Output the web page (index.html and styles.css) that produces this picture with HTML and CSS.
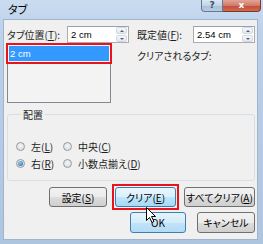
FILE: index.html
```html
<!DOCTYPE html>
<html lang="ja">
<head>
  <meta charset="UTF-8" />
  <title>タブ</title>
  <link rel="stylesheet" href="styles.css">
</head>
<body>

  <div class="window">
    <div class="titlebar">
      <span class="title">タブ</span>
      <div class="caption">
        <span class="cap-btn help">?</span>
        <span class="cap-btn close">x</span>
      </div>
    </div>

    <div class="client">
      <div class="top">
        <div class="col-left">
          <div class="field">
            <span class="lbl lbl-pos">タブ位置(<u>T</u>):</span>
            <div class="spin">
              <span class="spin-val">2 cm</span>
              <span class="spin-btns"><i class="up"></i><i class="down"></i></span>
            </div>
          </div>
          <div class="listbox">
            <div class="item sel">2 cm</div>
          </div>
        </div>

        <div class="col-right">
          <div class="field">
            <span class="lbl lbl-def">既定値(<u>F</u>):</span>
            <div class="spin">
              <span class="spin-val">2.54 cm</span>
              <span class="spin-btns"><i class="up"></i><i class="down"></i></span>
            </div>
          </div>
          <div class="clear-label">クリアされるタブ:</div>
        </div>
      </div>

      <fieldset class="group">
        <legend>配置</legend>
        <div class="radios">
          <label class="radio"><span class="dot"></span><span class="rtext">左(<u>L</u>)</span></label>
          <label class="radio"><span class="dot"></span><span class="rtext">中央(<u>C</u>)</span></label>
          <label class="radio"><span class="dot on"></span><span class="rtext">右(<u>R</u>)</span></label>
          <label class="radio"><span class="dot"></span><span class="rtext">小数点揃え(<u>D</u>)</span></label>
        </div>
      </fieldset>

      <div class="btn-row row1">
        <button class="btn w-set">設定(<u>S</u>)</button>
        <span class="marked"><button class="btn hot w-clear">クリア(<u>E</u>)</button></span>
        <button class="btn w-all">すべてクリア(<u>A</u>)</button>
      </div>
      <div class="btn-row row2">
        <button class="btn def w-ok">OK</button>
        <button class="btn w-cancel">キャンセル</button>
      </div>
    </div>

    <svg class="cursor" width="12" height="17" viewBox="0 0 12 17">
      <path d="M0.5 0.5 L0.5 13.5 L3.5 10.5 L6 15.5 L8 14.5 L5.5 9.5 L9.5 9.5 Z" fill="#fff" stroke="#000" stroke-width="1"/>
    </svg>
  </div>

</body>
</html>
```

FILE: styles.css
```css
* {
  box-sizing: border-box;
}

body {
  margin: 0;
  font-family: "Noto Sans CJK JP", "Noto Sans", sans-serif;
  font-size: 10px;
  font-feature-settings: "palt";
  color: #1e1e1e;
}

u {
  text-decoration: underline;
  text-underline-offset: 1px;
}

.window {
  position: relative;
  width: 263px;
  height: 244px;
  background: linear-gradient(#cadcf0, #bcd1ea 30px, #aec5e0);
  overflow: hidden;
}

/* title bar */
.titlebar {
  height: 19px;
  display: flex;
  align-items: flex-start;
}

.title {
  padding: 3px 0 0 8px;
  font-size: 11px;
  line-height: 13px;
  color: #000;
}

.caption {
  margin-left: auto;
  margin-right: 2px;
  display: flex;
}

.cap-btn {
  height: 12px;
  display: flex;
  align-items: center;
  justify-content: center;
  font-family: "DejaVu Sans", sans-serif;
  font-weight: bold;
  font-size: 9px;
  line-height: 1;
  border: 1px solid #5f7896;
  border-top: none;
}

.help {
  width: 22px;
  color: #3c4b63;
  background: linear-gradient(#dbe6f2, #c3d4e8 50%, #a8bfd9 51%, #b9cde3);
  border-radius: 0 0 0 4px;
}

.close {
  width: 38px;
  color: #fff;
  background: linear-gradient(#e4a497, #d27a68 50%, #c14d37 51%, #d16a50);
  border-left: none;
  border-color: #7a3a32;
  border-radius: 0 0 4px 0;
}

/* client area */
.client {
  margin: 0 5px 0 3px;
  height: 221px;
  background: #f0f0f0;
  border: 1px solid #9fb4cd;
  padding: 6px 2px 0 3px;
}

.top {
  display: flex;
  gap: 8px;
}

.col-left {
  width: 122px;
}

.col-right {
  flex: 1;
}

.field {
  display: flex;
  align-items: center;
  height: 17px;
}

.lbl {
  line-height: 12px;
  white-space: nowrap;
}

.lbl-pos {
  width: 60px;
}

.lbl-def {
  width: 56px;
}

.spin {
  flex: 1;
  height: 17px;
  display: flex;
  align-items: center;
  background: #fff;
  border: 1px solid #abadb3;
  border-top-color: #9aa0a8;
}

.spin-val {
  flex: 1;
  padding-left: 3px;
  font-family: "Liberation Sans", sans-serif;
  font-size: 9.5px;
  color: #000;
}

.spin-btns {
  width: 11px;
  height: 15px;
  margin-right: 1px;
  display: flex;
  flex-direction: column;
  gap: 1px;
}

.spin-btns i {
  flex: 1;
  display: flex;
  align-items: center;
  justify-content: center;
  background: linear-gradient(#f6f8fa, #e3e8ee);
  border: 1px solid #d3d9e0;
  border-radius: 2px;
}

.spin-btns i::after {
  content: "";
  border-left: 2px solid transparent;
  border-right: 2px solid transparent;
}

.spin-btns .up::after {
  border-bottom: 2px solid #4d6185;
}

.spin-btns .down::after {
  border-top: 2px solid #4d6185;
}

.listbox {
  margin-top: 1px;
  width: 104px;
  height: 59px;
  background: #f3f3f3;
  border: 1px solid #828790;
  padding: 1px;
}

.item {
  height: 15px;
  padding-left: 1px;
  line-height: 15px;
  font-family: "Liberation Sans", sans-serif;
  font-size: 9.5px;
}

.item.sel {
  background: #3399ff;
  color: #fff;
  outline: 2px solid #e8141b;
  outline-offset: 1px;
}

.clear-label {
  margin-top: 7px;
  line-height: 12px;
}

/* 配置 group */
.group {
  margin: 6px 0 0;
  padding: 20px 0 10px 8px;
  border: 1px solid #d5dfe5;
  border-radius: 3px;
}

.group legend {
  margin-left: 5px;
  padding: 0 2px;
  line-height: 11px;
}

.radios {
  display: grid;
  grid-template-columns: 47px auto;
  row-gap: 4px;
}

.radio {
  display: flex;
  align-items: center;
  gap: 6px;
  height: 13px;
  line-height: 12px;
  white-space: nowrap;
}

.dot {
  flex: none;
  width: 9px;
  height: 9px;
  border-radius: 50%;
  border: 1px solid #979aa0;
  background: radial-gradient(circle at 50% 40%, #f4f4f4, #d8d8d8);
  display: flex;
  align-items: center;
  justify-content: center;
}

.dot.on::after {
  content: "";
  width: 5px;
  height: 5px;
  border-radius: 50%;
  background: radial-gradient(circle at 40% 35%, #8fd0f6, #1d5c9b);
}

/* buttons */
.btn-row {
  display: flex;
  justify-content: flex-end;
}

.row1 {
  margin-top: 6px;
  gap: 8px;
}

.row2 {
  margin-top: 5px;
  gap: 11px;
}

.btn {
  height: 20px;
  padding: 0;
  font: inherit;
  white-space: nowrap;
  color: #000;
  border: 1px solid #707070;
  border-radius: 3px;
  background: linear-gradient(#f2f2f2, #ebebeb 50%, #dddddd 51%, #cfcfcf);
}

.row2 .btn {
  height: 21px;
}

.btn.hot {
  border-color: #3c7fb1;
  background: linear-gradient(#eaf6fd, #d9f0fc 50%, #bee6fd 51%, #a7d9f5);
}

.btn.def {
  border-color: #3c7fb1;
  background: linear-gradient(#e5f3fb, #d4ecfa 50%, #c2e3f8 51%, #b3dbf5);
}

/* red annotation frame, kept out of the layout */
.marked {
  display: flex;
  margin: -3px;
  padding: 1px;
  border: 2px solid #e8141b;
}

.w-set { width: 58px; }
.w-clear { width: 61px; }
.w-all { width: 71px; }
.w-ok { width: 56px; }
.w-cancel { width: 58px; }

.cursor {
  position: absolute;
  left: 146px;
  top: 207px;
}
```
